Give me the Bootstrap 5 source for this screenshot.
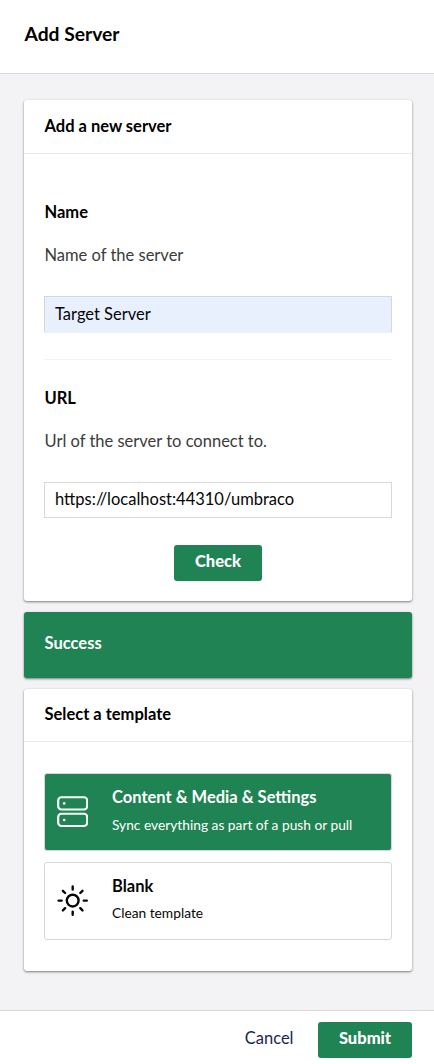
<!DOCTYPE html>
<html lang="en">
<head>
<meta charset="utf-8">
<meta name="viewport" content="width=device-width, initial-scale=1">
<title>Add Server</title>
<link href="https://cdn.jsdelivr.net/npm/bootstrap@5.3.0/dist/css/bootstrap.min.css" rel="stylesheet">
<style>
body { font-family: Lato, sans-serif; font-size: 16.5px; line-height: 24px; color: #060606; background: #f3f3f5; height: 1064px; overflow: hidden; }
.top-bar { height: 74px; border-bottom: 1px solid #d8d7d9; padding: 0 24.5px 5px; }
.top-bar h1 { font-size: 19.25px; font-weight: 700; line-height: 24px; color: #000; }
.content { padding: 26px 22px 0 24px; gap: 11px; }
.box { border: 0; border-radius: 3px; box-shadow: 0 1px 3px rgba(0,0,0,.24), 0 1px 2px rgba(0,0,0,.3); }
.box .card-header { height: 53px; background: #fff; border-bottom: 1px solid #e9e9eb; padding: 13px 20.5px; font-weight: 700; color: #000; }
.box .card-body { padding: 0 20px; }
.server-box .card-header { height: 54px; padding-top: 14px; }
.server-box .card-body { height: 447px; padding-top: 46px; padding-bottom: 20px; }
.template-box .card-body { gap: 11px; padding-top: 31px; padding-bottom: 31px; }
.prop-label { font-weight: 700; color: #000; display: block; margin-bottom: 19px; padding-left: .5px; }
.prop-desc { color: #3b3b3b; margin-bottom: 29px; padding-left: .5px; }
.box .form-control { height: 36px; border: 1px solid #d8d7d9; border-radius: 0; padding: 0 10px 2px; line-height: 32px; font-size: 16.5px; color: #060606; }
.box .filled { background: #e8f0fe; border-bottom-color: #e8f0fe; height: 37px; }
.rule { border-top: 1px solid #f3f3f5; margin: 26px 0; }
.btn-go { height: 36px; background: #1f8354; color: #fff; border: 0; border-radius: 3px; font-size: 16.5px; font-weight: 900; padding: 0 20.6px 4px; line-height: 32px; }
.btn-go:hover { background: #1b744a; color: #fff; }
.bottom-bar .btn-go { width: 94px; }
.notice { height: 66px; background: #1f8354; color: #fff; font-weight: 700; padding: 19px 20.5px; }
.choice { height: 78px; border: 1px solid #d8d7d9; border-radius: 3px; padding: 0 12px; }
.choice svg { margin-bottom: 1px; }
.choice.active { background: #1f8354; color: #fff; }
.choice-text { margin-left: 24px; margin-top: -4px; }
.choice strong { display: block; font-weight: 700; line-height: 24px; margin-bottom: 3px; }
.choice span { display: block; font-size: 13.75px; line-height: 24px; }
.choice.active .choice-text { margin-top: -3px; }
.choice.active strong { margin-bottom: 4px; }
.bottom-bar { height: 54px; background: #fff; border-top: 1px solid #d8d7d9; padding: 11px 22px 0 0; }
.btn-plain { height: 36px; border: 0; color: #1b264f; font-size: 16.5px; padding: 0 24.5px 4px; line-height: 32px; }
</style>
</head>
<body class="d-flex flex-column">
<header class="top-bar bg-white d-flex align-items-center"><h1 class="m-0">Add Server</h1></header>

<main class="content flex-grow-1 d-flex flex-column">
  <section class="box server-box card">
    <div class="card-header">Add a new server</div>
    <div class="card-body d-flex flex-column">
      <div>
        <label class="prop-label" for="name">Name</label>
        <p class="prop-desc">Name of the server</p>
        <input id="name" class="form-control filled" value="Target Server">
      </div>
      <div class="rule"></div>
      <div>
        <label class="prop-label" for="url">URL</label>
        <p class="prop-desc">Url of the server to connect to.</p>
        <input id="url" class="form-control" value="https://localhost:44310/umbraco">
      </div>
      <button type="button" class="btn btn-go align-self-center mt-auto">Check</button>
    </div>
  </section>

  <section class="box notice" role="status">Success</section>

  <section class="box template-box card">
    <div class="card-header">Select a template</div>
    <div class="card-body d-flex flex-column">
      <div class="choice active d-flex align-items-center">
        <svg width="31" height="31" viewBox="0 0 31 31" fill="none" stroke="currentColor" stroke-width="2.1"><rect x="1.2" y="1.2" width="29" height="12.3" rx="3.2"/><rect x="1.2" y="17.7" width="29" height="12.3" rx="3.2"/><circle cx="7.2" cy="7.4" r="1.3" fill="currentColor" stroke="none"/><circle cx="7.2" cy="24" r="1.3" fill="currentColor" stroke="none"/></svg>
        <div class="choice-text"><strong>Content &amp; Media &amp; Settings</strong><span>Sync everything as part of a push or pull</span></div>
      </div>
      <div class="choice d-flex align-items-center">
        <svg width="31" height="31" viewBox="0 0 31 31" fill="none" stroke="currentColor" stroke-width="2.4" stroke-linecap="round"><circle cx="15.7" cy="15.6" r="5.9"/><path d="M15.7 1.5v3.1M15.7 26.6v3.1M1.6 15.6h3.1M26.7 15.6h3.1M5.9 5.8l2.2 2.2M23.3 23.2l2.2 2.2M5.9 25.4l2.2-2.2M23.3 8l2.2-2.2"/></svg>
        <div class="choice-text"><strong>Blank</strong><span>Clean template</span></div>
      </div>
    </div>
  </section>
</main>

<footer class="bottom-bar d-flex justify-content-end align-items-start">
  <button type="button" class="btn btn-plain">Cancel</button>
  <button type="button" class="btn btn-go">Submit</button>
</footer>
<script src="https://cdn.jsdelivr.net/npm/bootstrap@5.3.0/dist/js/bootstrap.bundle.min.js"></script>
</body>
</html>
